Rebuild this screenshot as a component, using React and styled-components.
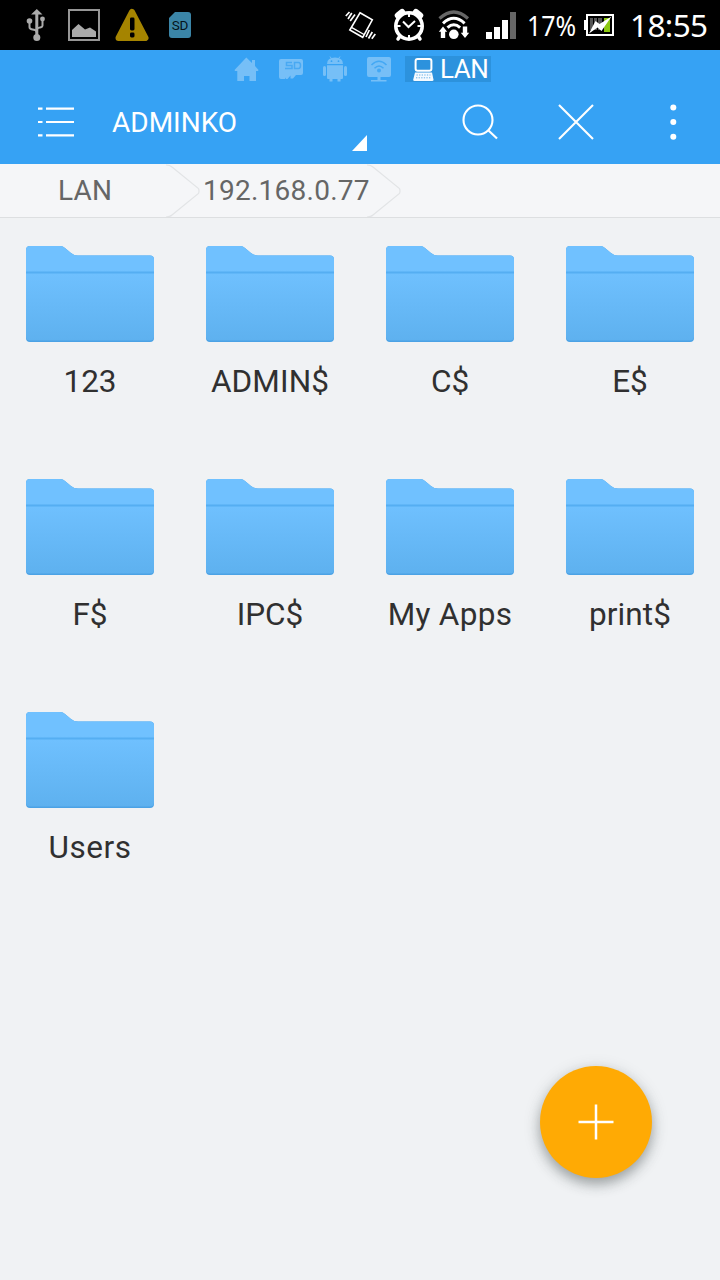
import React from "react";
import styled, { createGlobalStyle } from "styled-components";

const GlobalStyle = createGlobalStyle`
  * { box-sizing: border-box; }
  body { margin: 0; background: #f0f2f4; font-family: Roboto, sans-serif; }
`;

const Screen = styled.div`
  position: relative;
  width: 720px;
  height: 1280px;
  background: #f0f2f4;
  overflow: hidden;
`;

const StatusBar = styled.div`
  display: flex;
  align-items: center;
  height: 50px;
  background: #000;
  color: #fff;
  font-family: "Noto Sans", sans-serif;
`;

const Icon = styled.svg`
  display: block;
  flex: none;
  margin-left: ${(p) => p.$gap || 0}px;
`;

const BatteryLevel = styled.span`
  width: 49px;
  margin-left: 11px;
  padding-top: 1px;
  font-size: 27px;
  line-height: 50px;
  white-space: nowrap;
  transform: scaleX(0.92);
  transform-origin: 0 50%;
`;

const Clock = styled.span`
  margin-left: 16px;
  font-size: 31.5px;
  line-height: 50px;
  letter-spacing: -0.6px;
`;

const Header = styled.header`
  height: 114px;
  background: #36a2f4;
  color: #fff;
`;

const WindowTabs = styled.nav`
  display: flex;
  align-items: center;
  height: 38px;
  padding-left: 233px;
`;

const ActiveTab = styled.div`
  display: flex;
  align-items: center;
  width: 86px;
  height: 26px;
  margin-left: 13px;
  padding-left: 8px;
  background: #2c92dd;
  font-size: 26px;
  line-height: 26px;
`;

const TabName = styled.span`
  margin-left: 6px;
  letter-spacing: -0.5px;
`;

const Toolbar = styled.div`
  display: flex;
  align-items: center;
  height: 68px;
  padding-left: 38px;
`;

const Title = styled.div`
  width: 240px;
  margin-left: 38px;
  padding-top: 2px;
  font-size: 28px;
  line-height: 32px;
`;

const Spinner = styled.svg`
  display: block;
  flex: none;
  align-self: flex-end;
  margin-bottom: 5px;
`;

const Breadcrumbs = styled.nav`
  display: flex;
  height: 54px;
  background: #f5f6f8;
  border-bottom: 1px solid #dddfe1;
  color: #666;
  font-size: 28px;
  line-height: 53px;
  letter-spacing: 0.25px;
`;

const Crumb = styled.div`
  display: flex;
  width: ${(p) => p.$width}px;
  padding-left: ${(p) => p.$inset}px;
  white-space: nowrap;
`;

const Chevron = styled.svg`
  display: block;
  flex: none;
  margin-left: auto;
`;

const CrumbText = styled.span`
  width: 0;
`;

const Grid = styled.main`
  display: grid;
  grid-template-columns: repeat(4, 180px);
  grid-auto-rows: 233px;
  padding-top: 28px;
`;

const Item = styled.div`
  display: flex;
  flex-direction: column;
  align-items: center;
`;

const Name = styled.span`
  margin-top: 19px;
  color: #303030;
  font-size: 31.5px;
  line-height: 41px;
  letter-spacing: ${(p) => p.$tracking}px;
`;

const AddButton = styled.button`
  position: absolute;
  left: 540px;
  top: 1066px;
  display: flex;
  align-items: center;
  justify-content: center;
  width: 112px;
  height: 112px;
  padding: 0;
  border: 0;
  border-radius: 50%;
  background: #ffaa04;
  box-shadow: 0 6px 12px rgba(60, 70, 70, 0.38), 0 4px 18px rgba(60, 70, 70, 0.16);
`;

const UsbIcon = () => (
  <Icon $gap={26} width="20" height="34" viewBox="0 0 20 34" fill="#aaa">
    <path d="M10.8 1l5.7 5.5h-4.2V28h-3V6.5H5.1z" />
    <circle cx="10.8" cy="29.5" r="3.5" />
    <circle cx="3.5" cy="13" r="2.8" />
    <circle cx="16.5" cy="11" r="2.4" />
    <path d="M3.5 14v5q0 1.8 2 2.2L9 22q1.800.5 1.800 2.500M16.500 12v5.500q0 1.500-1.500 1.800l-2.500.6q-1.500.4-1.500 2" fill="none" stroke="#aaa" strokeWidth="2" />
  </Icon>
);

const PictureIcon = () => (
  <Icon $gap={22} width="32" height="32" viewBox="0 0 32 32">
    <path d="M1 1h30v30H1z" fill="none" stroke="#979797" strokeWidth="2" />
    <path d="M4 28v-7l6.5-6 6.5 5.500 5-2 6 4V28z" fill="#aaa" />
  </Icon>
);

const WarningIcon = () => (
  <Icon $gap={15} width="34" height="34" viewBox="0 0 34 34">
    <path d="M17 4L30.5 30h-27z" fill="#a58400" stroke="#a58400" strokeWidth="6" strokeLinejoin="round" />
    <rect x="15" y="9.5" width="4.5" height="13" rx="1.4" fill="#000" />
    <rect x="15" y="24.5" width="4.5" height="5" rx="1.4" fill="#000" />
  </Icon>
);

const SdText = styled.text`
  font: 13.5px Roboto, sans-serif;
  fill: #06141b;
`;

const SdIcon = () => (
  <Icon $gap={20} width="22" height="26" viewBox="0 0 22 26">
    <path d="M6 0h13q3 0 3 3v20q0 3-3 3H3q-3 0-3-3V6z" fill="#3b85a7" />
    <SdText x="2.8" y="18" textLength="16.5">SD</SdText>
  </Icon>
);

const VibrateIcon = () => (
  <Icon $gap={154} width="32" height="30" viewBox="0 0 32 30" fill="none" stroke="#fff">
    <path d="M15 2.800L27.300 9.800 17.700 27.300 4.800 20z" strokeWidth="1.6" />
    <path d="M6.5 17.300l12.500 7.200" strokeWidth="1.4" />
    <path d="M.8 6L4.500 2M3 9l3.800-6M5.200 11l4.800-6.500M24.300 20l-3.300 7M27.300 22l-3.800 6.500M30.300 24l-3.500 4.800" strokeWidth="1.7" />
  </Icon>
);

const AlarmIcon = () => (
  <Icon $gap={16} width="32" height="34" viewBox="0 0 32 34" fill="none" stroke="#fff">
    <path d="M5 7.500l4-3.200M27 7.500l-4-3.200" strokeWidth="6.5" strokeLinecap="round" />
    <path d="M7 28l-2 3M25 28l2 3" strokeWidth="3.5" strokeLinecap="round" />
    <circle cx="16" cy="18" r="13.2" fill="#000" strokeWidth="3.6" />
    <path d="M16 5v4M16 27v4M4 18h3.5M24.5 18H28" strokeWidth="2" />
    <path d="M10 13.500l5.500 5.500 6.500-6" strokeWidth="2" />
  </Icon>
);

const WifiIcon = () => (
  <Icon $gap={13} width="32" height="30" viewBox="0 0 32 30" fill="none" stroke="#fff">
    <path d="M1.5 8.5Q15.8-4.5 30 8.5" stroke="#666" strokeWidth="3.2" />
    <path d="M5 13.3q10.700-10 21.600 0" strokeWidth="3" />
    <path d="M9.5 17.6q6.300-5.800 12.600 0" strokeWidth="3" />
    <circle cx="15.8" cy="24.3" r="4.8" fill="#fff" stroke="none" />
    <path d="M5 16.500l4.200 5.200H7.200V28H2.800v-6.300H.8zM27 28l4.200-5.200h-2V16.500h-4.400v6.300h-2z" fill="#fff" stroke="none" />
  </Icon>
);

const SignalIcon = () => (
  <Icon $gap={16} width="30" height="27" viewBox="0 0 30 27" fill="#fff">
    <path d="M0 20h6v7H0zM8 15h6v12H8zM16 8h6v19h-6z" />
    <path d="M24 0h6v27h-6z" fill="#666" />
  </Icon>
);

const BatteryIcon = () => (
  <Icon $gap={8} width="30" height="22" viewBox="0 0 30 22">
    <path d="M0 6h3v10H0z" fill="#fff" />
    <path d="M3 1h26v20H3z" fill="#000" stroke="#fff" strokeWidth="2" />
    <path d="M6 4h3v12H6zM10 4h3v12h-3zM14 4h4v12h-4z" fill="#555" />
    <path d="M20 4h6v14h-6z" fill="#8cc811" />
    <path d="M27.5 2.500L17.500 17l-4-3.500L5 19.500l6.500-12.500 4 3z" fill="#fff" />
  </Icon>
);

const HomeIcon = () => (
  <Icon width="26" height="26" viewBox="0 0 26 26" fill="#76bff7">
    <path d="M13.3 1.500L19 7V4h3v6l3.500 4-.5 1h-2v10h-6.500v-5h-5.500v5H4.300V15H2l-.5-1z" />
  </Icon>
);

const SdTabIcon = () => (
  <Icon $gap={19} width="26" height="26" viewBox="0 0 26 26">
    <path d="M3 3h20q2 0 2 2v12q0 2-2 2h-5l-3 3.500h-2.500v-3l-3 3.500H8v-1.500l-1 1.500H3q-2 0-2-2V5q0-2 2-2z" fill="#76bff7" />
    <path d="M14 6.500H8.500v3H14v3H7M16.500 6.500h4q2 0 2 3t-2 3h-4z" fill="none" stroke="#48a9f3" strokeWidth="1.5" />
  </Icon>
);

const AndroidIcon = () => (
  <Icon $gap={18} width="26" height="26" viewBox="0 0 26 26" fill="#76bff7">
    <path d="M5 8q0-6.500 8-6.500T21 8zM5 9.300h16V22q0 1-1 1H6q-1 0-1-1z" />
    <rect x="1" y="10" width="3" height="10" rx="1.5" />
    <rect x="22" y="10" width="3" height="10" rx="1.5" />
    <path d="M7.500 22h3v3.500h-3zM15.500 22h3v3.500h-3z" />
    <path d="M8 .5l2 3M18 .5l-2 3" stroke="#76bff7" />
    <circle cx="9.5" cy="5.2" r=".9" fill="#36a2f4" />
    <circle cx="16.5" cy="5.2" r=".9" fill="#36a2f4" />
  </Icon>
);

const NetworkIcon = () => (
  <Icon $gap={18} width="26" height="26" viewBox="0 0 26 26">
    <path d="M3 1h20q2 0 2 2v16q0 2-2 2h-8.500v3h6v1.500H5V24h6.500v-3H3q-2 0-2-2V3q0-2 2-2z" fill="#76bff7" />
    <path d="M5.500 9Q13 1.500 20.500 9M8.500 12.300q4.500-4.500 9 0" fill="none" stroke="#43a8f4" strokeWidth="1.500" />
    <circle cx="13" cy="14.500" r="2" fill="#43a8f4" />
  </Icon>
);

const ComputerIcon = () => (
  <Icon width="21" height="25" viewBox="0 0 21 25">
    <rect x="2.6" y="2" width="15.8" height="11.8" rx="2" fill="none" stroke="#fff" strokeWidth="2" />
    <path d="M2 15.500h17l1.500 7.200q0 1.300-1.300 1.300H1.500Q.2 24 .2 22.700z" fill="#f5faff" />
    <path d="M3.500 18h14M3 20.800h15" stroke="#64afe6" strokeWidth="1" strokeDasharray="1.3 1.3" />
  </Icon>
);

const FolderIcon = () => (
  <Icon width="128" height="96" viewBox="0 0 128 96">
    <defs>
      <linearGradient id="folderFill" x1="0" y1="0" x2="0" y2="1">
        <stop offset="0.25" stopColor="#70c1ff" />
        <stop offset="1" stopColor="#5eb1ef" />
      </linearGradient>
    </defs>
    <path d="M4 0h30q3 0 5 2l6 5q3 2.500 7 2.500h72q4 0 4 4V92q0 4-4 4H4q-4 0-4-4V4q0-4 4-4z" fill="#4ba2e5" />
    <path d="M4 0h30q3 0 5 2l6 5q3 2.500 7 2.500h72q4 0 4 4V90.500q0 4-4 4H4q-4 0-4-4V4q0-4 4-4z" fill="url(#folderFill)" />
    <path d="M0 26.500h128" stroke="#55aef2" strokeWidth="2" />
  </Icon>
);

const CrumbArrow = () => (
  <Chevron width="34" height="53" viewBox="0 0 34 53" fill="none" stroke="#e2e4e6" strokeWidth="1.2">
    <path d="M0 1q4 0 6 2l26.500 21.500q1 2.500 0 5L6 51q-2 2-6 2" />
  </Chevron>
);

const folders = [
  ["123", 0], ["ADMIN$", 0.1], ["C$", 0], ["E$", 0],
  ["F$", 0], ["IPC$", 0], ["My Apps", 0.3], ["print$", 0.1], ["Users", 0.5],
];

export default function App() {
  return (
    <Screen>
      <GlobalStyle />
      <StatusBar>
        <UsbIcon />
        <PictureIcon />
        <WarningIcon />
        <SdIcon />
        <VibrateIcon />
        <AlarmIcon />
        <WifiIcon />
        <SignalIcon />
        <BatteryLevel>17%</BatteryLevel>
        <BatteryIcon />
        <Clock>18:55</Clock>
      </StatusBar>
      <Header>
        <WindowTabs>
          <HomeIcon />
          <SdTabIcon />
          <AndroidIcon />
          <NetworkIcon />
          <ActiveTab>
            <ComputerIcon />
            <TabName>LAN</TabName>
          </ActiveTab>
        </WindowTabs>
        <Toolbar>
          <Icon width="36" height="32" viewBox="0 0 36 32" stroke="#fff" strokeWidth="2.2">
            <path d="M0 2.700h4.500M8 2.700h28M0 16h4.500M8 16h28M0 29.300h4.500M8 29.300h28" />
          </Icon>
          <Title>ADMINKO</Title>
          <Spinner width="15" height="16" viewBox="0 0 15 16" fill="#fff">
            <path d="M15 0v16H0z" />
          </Spinner>
          <Icon $gap={95} width="36" height="36" viewBox="0 0 36 36" fill="none" stroke="#fff" strokeWidth="2.1">
            <circle cx="16" cy="16" r="14.5" />
            <path d="M26.500 26.500l8.500 8" />
          </Icon>
          <Icon $gap={60} width="36" height="36" viewBox="0 0 36 36" stroke="#fff" strokeWidth="2.1">
            <path d="M1 1l34 34M35 1L1 35" />
          </Icon>
          <Icon $gap={76} width="8" height="36" viewBox="0 0 8 36" fill="#fff">
            <circle cx="3.3" cy="3.5" r="3" />
            <circle cx="3.3" cy="18" r="3" />
            <circle cx="3.3" cy="32.7" r="3" />
          </Icon>
        </Toolbar>
      </Header>
      <Breadcrumbs>
        <Crumb $width={200} $inset={58}>
          <CrumbText>LAN</CrumbText>
          <CrumbArrow />
        </Crumb>
        <Crumb $width={201} $inset={3}>
          <CrumbText>192.168.0.77</CrumbText>
          <CrumbArrow />
        </Crumb>
      </Breadcrumbs>
      <Grid>
        {folders.map(([name, tracking]) => (
          <Item key={name}>
            <FolderIcon />
            <Name $tracking={tracking}>{name}</Name>
          </Item>
        ))}
      </Grid>
      <AddButton aria-label="Add">
        <svg width="36" height="36" viewBox="0 0 36 36" stroke="#fff" strokeWidth="2.5">
          <path d="M18 .5v35M.5 18h35" />
        </svg>
      </AddButton>
    </Screen>
  );
}
